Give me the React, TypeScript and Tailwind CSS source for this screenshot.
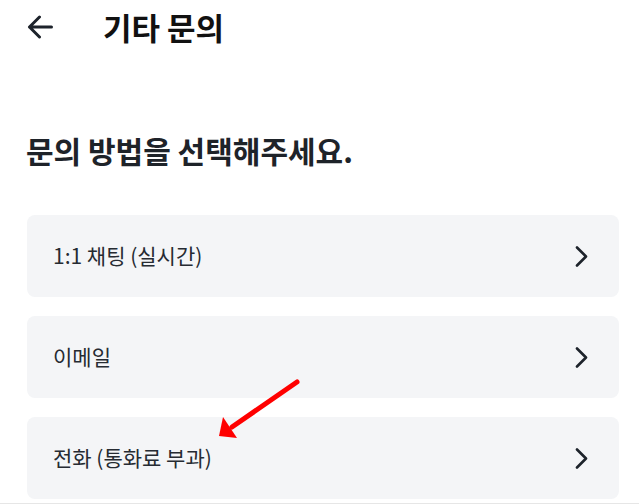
const options = ["1:1 채팅 (실시간)", "이메일", "전화 (통화료 부과)"];

export default function App() {
  return (
    <div
      className="relative w-[639px] h-[504px] overflow-hidden bg-white border-b border-[#e6e6e6]"
      style={{ fontFamily: '"Noto Sans CJK KR", "Noto Sans", sans-serif' }}
    >
      {/* Header */}
      <div className="flex items-center h-[54px] pl-[27px]">
        <svg width="26" height="24" viewBox="0 0 26 24" fill="none" className="text-[#1d232b]">
          <path
            d="M24.5 12H2.5M2.5 12L12.5 2M2.5 12L12.5 22"
            stroke="currentColor"
            strokeWidth="3"
            strokeLinecap="round"
            strokeLinejoin="round"
          />
        </svg>
        <h1 className="ml-[50px] text-[31px] font-bold text-[#111111] leading-[36px]">기타 문의</h1>
      </div>

      {/* Heading */}
      <h2 className="mt-[80px] pl-[26px] text-[30px] font-bold text-[#1e2329] leading-[32px]">
        문의 방법을 선택해주세요.
      </h2>

      {/* Options */}
      <div className="mt-[49px] ml-[27px] mr-[20px] flex flex-col gap-[19px]">
        {options.map((label) => (
          <div
            key={label}
            className="h-[82px] rounded-[8px] bg-[#f4f5f7] flex items-center justify-between pl-[26px] pr-[31px]"
          >
            <span className="text-[21px] text-[#262b32]">{label}</span>
            <svg width="13" height="21" viewBox="0 0 13 21" fill="none" className="text-[#1d232b]">
              <path
                d="M2 1.5L11 10.5L2 19.5"
                stroke="currentColor"
                strokeWidth="2.6"
                strokeLinecap="round"
                strokeLinejoin="round"
              />
            </svg>
          </div>
        ))}
      </div>

      {/* Annotation arrow */}
      <svg className="absolute left-0 top-0 pointer-events-none" width="639" height="504">
        <line x1="297" y1="382" x2="232" y2="427" stroke="#ff0000" strokeWidth="5" strokeLinecap="round" />
        <polygon points="219,436 223,417 237,438" fill="#ff0000" />
      </svg>
    </div>
  );
}
